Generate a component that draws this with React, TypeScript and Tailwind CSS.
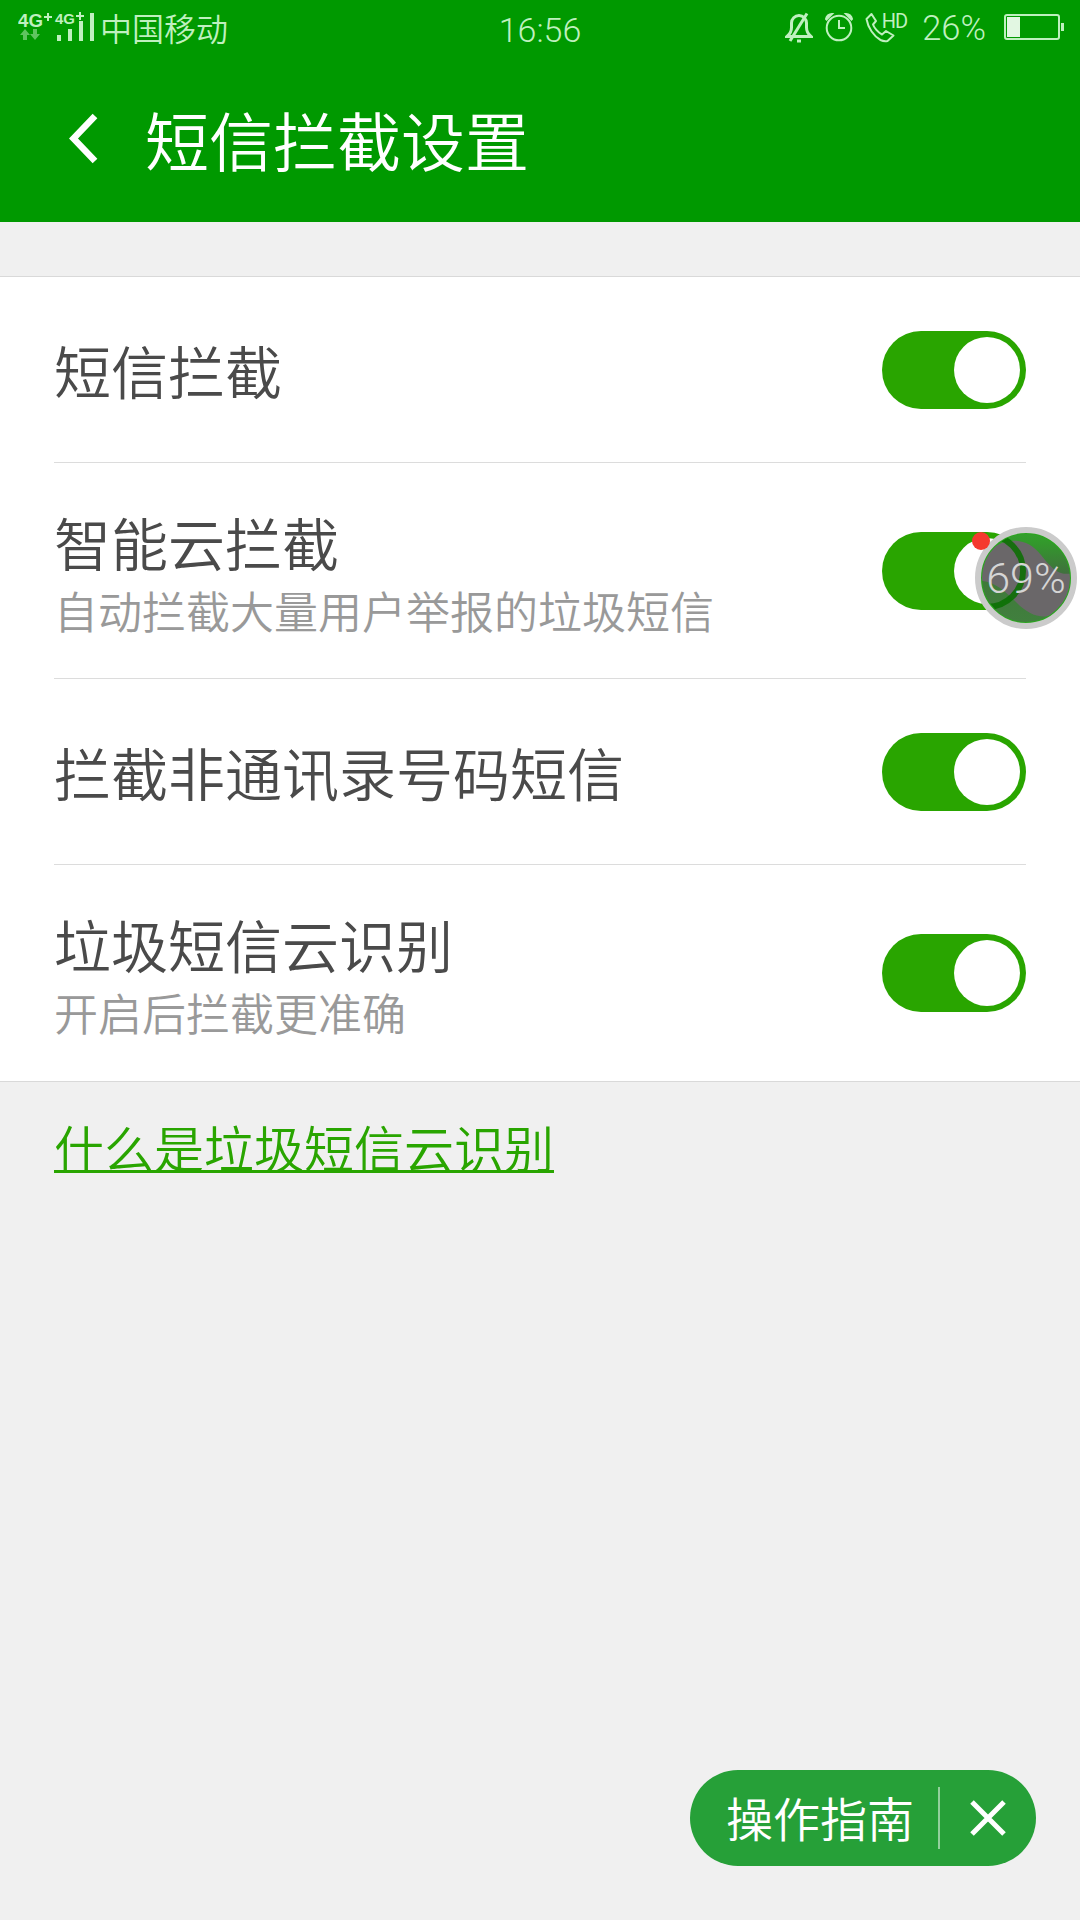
import React, { useState } from 'react'

type Setting = {
  id: string
  title: string
  desc?: string
}

const settings: Setting[] = [
  { id: 'sms', title: '短信拦截' },
  { id: 'cloud', title: '智能云拦截', desc: '自动拦截大量用户举报的垃圾短信' },
  { id: 'unknown', title: '拦截非通讯录号码短信' },
  { id: 'identify', title: '垃圾短信云识别', desc: '开启后拦截更准确' },
]

function SignalIcon() {
  return (
    <svg width="78" height="44" viewBox="0 -6 78 44" fill="#bff0bf">
      <text x="0" y="14.5" fontSize="19" fontWeight="700" fontFamily="Liberation Sans, sans-serif" textLength="25" lengthAdjust="spacingAndGlyphs">4G</text>
      <path d="M30 1v8M26 5h8" stroke="#bff0bf" strokeWidth="2" />
      <text x="37" y="12" fontSize="15" fontWeight="700" fontFamily="Liberation Sans, sans-serif" textLength="20" lengthAdjust="spacingAndGlyphs">4G</text>
      <path d="M62 0v8M58 4h8" stroke="#bff0bf" strokeWidth="2" />
      <path d="M7 17l5 6H9v5H5v-5H2z" opacity=".5" />
      <path d="M17 28l5-6h-3v-5h-4v5h-3z" opacity=".5" />
      <rect x="39" y="23" width="4" height="6" />
      <rect x="50" y="17" width="4" height="12" />
      <rect x="61" y="9" width="4" height="20" />
      <rect x="72" y="1" width="4" height="28" />
    </svg>
  )
}

function MuteIcon() {
  return (
    <svg width="28" height="32" viewBox="0 0 28 32" fill="none" stroke="#bff0bf" strokeWidth="3">
      <path d="M2 24.500c3-2.500 4.500-5 4.500-9V11a7.500 7.500 0 0 1 15 0v4.500c0 4 1.500 6.500 4.500 9z" />
      <path d="M22 1.500L5 29" />
      <path d="M12 29h4" />
    </svg>
  )
}

function AlarmIcon() {
  return (
    <svg width="30" height="32" viewBox="0 0 30 32" fill="none" stroke="#bff0bf" strokeWidth="2">
      <circle cx="15" cy="16" r="12.300" />
      <path d="M15 8v8h6" />
      <path d="M2 7A6 6 0 0 1 8 2L2.500 7.500zM28 7A6 6 0 0 0 22 2L27.500 7.500z" fill="#bff0bf" />
    </svg>
  )
}

function CallHdIcon() {
  return (
    <div className="flex items-start text-[#bff0bf]">
      <svg width="32" height="32" viewBox="0 0 32 32" fill="none" stroke="#bff0bf" strokeWidth="2" strokeLinejoin="round">
        <path d="M1.500 7L6.500 2l4.500 7-3 3.500c1 3 5 8 9 10l4-3.500 7.500 4.500-6 5.500c-3 .500-5 0-7-1C9 24.500 3 16 1.500 7z" />
      </svg>
      <span className="-mt-[1px] -ml-[15px] font-[Roboto] text-[20px] leading-[20px] font-normal tracking-[-1px]">HD</span>
    </div>
  )
}

function BatteryIcon() {
  return (
    <svg width="62" height="28" viewBox="0 0 62 28" fill="none">
      <rect x="1" y="1" width="54" height="24" rx="2" stroke="#bff0bf" strokeWidth="2" />
      <rect x="3" y="3" width="13" height="20" fill="#e2f7e2" />
      <rect x="57" y="9" width="3" height="8" fill="#bff0bf" />
    </svg>
  )
}

function StatusBar() {
  return (
    <div className="grid h-14 grid-cols-[1fr_auto_1fr] items-center pl-[18px] pr-[14px] text-[#bff0bf]">
      <div className="flex items-center gap-1">
        <SignalIcon />
        <span className="-mt-[3px] text-[32px] leading-none">中国移动</span>
      </div>
      <div className="pt-[3px] pr-[4px] font-[Roboto] text-[34px] leading-none font-[350]">16:56</div>
      <div className="flex items-center justify-end">
        <MuteIcon />
        <div className="ml-[11px]"><AlarmIcon /></div>
        <div className="ml-[11px]"><CallHdIcon /></div>
        <span className="mr-[18px] ml-[15px] font-[Roboto] text-[34.500px] leading-none font-[350]">26%</span>
        <BatteryIcon />
      </div>
    </div>
  )
}

function Toggle({ on, onChange }: { on: boolean; onChange: () => void }) {
  return (
    <button
      role="switch"
      aria-checked={on}
      onClick={onChange}
      className={`flex h-[78px] w-36 shrink-0 items-center rounded-full px-1.5 ${on ? 'justify-end bg-[#29a500]' : 'justify-start bg-gray-300'}`}
    >
      <span className="size-[66px] rounded-full bg-white" />
    </button>
  )
}

function FloatingBall() {
  return (
    <div className="absolute top-[527px] left-[975px] size-[102px]">
      <svg width="102" height="102" viewBox="0 0 102 102" className="absolute inset-0">
        <defs>
          <linearGradient id="ballTop" x1="0" y1="0" x2="0" y2="1">
            <stop offset="0" stopColor="#32a52b" />
            <stop offset=".35" stopColor="#33982c" />
            <stop offset="1" stopColor="#40703e" />
          </linearGradient>
          <linearGradient id="ballBottom" x1="0" y1="0" x2="0" y2="1">
            <stop offset="0" stopColor="#3f7a3a" />
            <stop offset="1" stopColor="#41803f" />
          </linearGradient>
          <clipPath id="ballClip">
            <circle cx="51" cy="51" r="45" />
          </clipPath>
        </defs>
        <g clipPath="url(#ballClip)">
          <rect width="102" height="102" fill="#6a6769" />
          <path d="M8 28C28 10 50 8 66 28s20 20 36 18V0H8z" fill="url(#ballTop)" />
          <path d="M0 54C16 52 28 62 42 76s30 20 54 4v22H0z" fill="url(#ballBottom)" />
          <circle cx="12" cy="44" r="36" fill="none" stroke="#087000" strokeWidth="6" opacity=".85" />
        </g>
        <circle cx="51" cy="51" r="45" fill="none" stroke="#2ba51f" strokeWidth="2" />
        <circle cx="51" cy="51" r="48" fill="none" stroke="#cbcbcb" strokeWidth="6" />
      </svg>
      <span className="absolute inset-0 flex items-center justify-center font-[Roboto] text-[43px] leading-none font-[350] text-[#d5d5d5]">69%</span>
      <span className="absolute top-[5px] -left-[3px] size-[18px] rounded-full bg-[#f5392f]" />
    </div>
  )
}

export default function App() {
  const [enabled, setEnabled] = useState<Record<string, boolean>>({ sms: true, cloud: true, unknown: true, identify: true })
  const [showGuide, setShowGuide] = useState(true)

  const toggle = (id: string) => setEnabled((s) => ({ ...s, [id]: !s[id] }))

  return (
    <div className="relative flex h-[1920px] w-[1080px] flex-col overflow-hidden bg-[#f0f0f0] font-['Noto_Sans_CJK_SC',sans-serif] font-[350]">
      <header className="h-[222px] bg-[#009900]">
        <StatusBar />
        <div className="flex h-[166px] items-start pt-[53px] pl-[68px]">
          <svg width="32" height="58" viewBox="0 0 32 58" fill="none" stroke="#fff" strokeWidth="6.500">
            <path d="M27 7L5.500 29.500L27 52" />
          </svg>
          <h1 className="-mt-[4px] ml-[45px] text-[64px] leading-[66px] text-white">短信拦截设置</h1>
        </div>
      </header>

      <main className="mt-[54px] border-y border-[#d9d9d9] bg-white px-[54px]">
        {settings.map((s) => (
          <div
            key={s.id}
            className={`flex items-center justify-between border-b border-[#dcdcdc] last:border-b-0 ${s.desc ? 'h-[216px]' : 'h-[186px]'}`}
          >
            <div className={s.desc ? 'pt-[6px]' : 'pb-[2px]'}>
              <div className="text-[57px] leading-[72px] text-[#4a4a4a]">{s.title}</div>
              {s.desc && <div className="text-[44px] leading-[66px] text-[#999999]">{s.desc}</div>}
            </div>
            <Toggle on={enabled[s.id]} onChange={() => toggle(s.id)} />
          </div>
        ))}
      </main>

      <div className="px-[54px] pt-[30px]">
        <a href="#" className="text-[50px] leading-[68px] text-[#29a500] underline decoration-[3px] underline-offset-[2px] [text-decoration-skip-ink:none]">
          什么是垃圾短信云识别
        </a>
      </div>

      {showGuide && (
        <div className="mt-auto mr-11 mb-[54px] flex h-24 w-[346px] items-center self-end rounded-full bg-[#26a038] pl-9 text-white">
          <span className="-mt-[4px] text-[47px] leading-none">操作指南</span>
          <span className="ml-[24px] h-[62px] w-0.5 bg-white/50" />
          <button onClick={() => setShowGuide(false)} className="ml-[29px]">
            <svg width="38" height="38" viewBox="0 0 38 38" fill="none" stroke="#fff" strokeWidth="5">
              <path d="M3 3l32 32M35 3L3 35" />
            </svg>
          </button>
        </div>
      )}

      <FloatingBall />
    </div>
  )
}
